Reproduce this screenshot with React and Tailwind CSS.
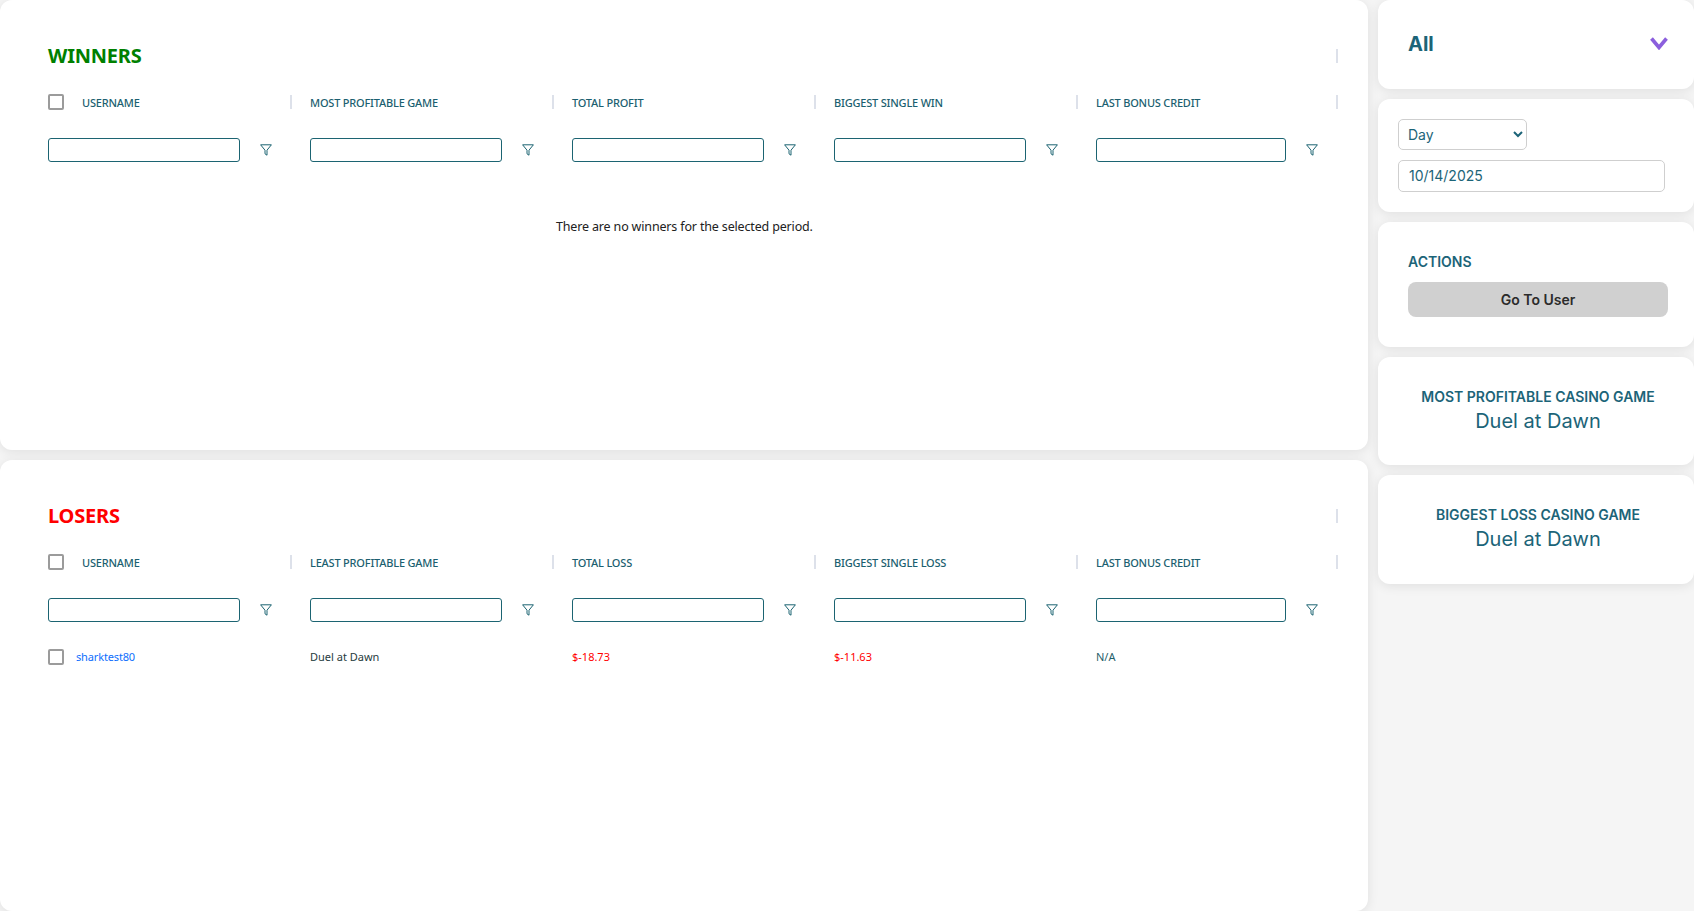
import React from 'react';

const FilterIcon = () => (
    <svg width="12" height="12" viewBox="0 0 12 12" fill="none" stroke="#1c6472" strokeWidth="1" className="shrink-0">
        <path d="M0.6 0.8H11.4L7 6.2V11.2L5 9.8V6.2Z" strokeLinejoin="round" />
    </svg>
);

const Checkbox = () => (
    <span className="block w-4 h-4 shrink-0 bg-white border-2 border-[#9b9b9b] rounded-[2px]" />
);

const Separator = () => <span className="block w-[2px] h-[14px] bg-[#dde1ea] shrink-0" />;

const Grid = ({ children, className = '' }) => (
    <div className={`grid grid-cols-[244px_244px_244px_244px_242px] gap-x-[18px] ${className}`}>{children}</div>
);

const ReportTable = ({ title, titleColor, columns, className, children }) => (
    <section className={`bg-white rounded-xl shadow-[0_2px_12px_rgba(0,0,0,0.09)] pl-12 pt-[46px] ${className}`}>
        <div className="flex justify-between items-center h-[20px] w-[1290px]">
            <h2 className={`text-[20px] leading-[20px] font-bold tracking-[-0.2px] ${titleColor}`}>{title}</h2>
            <Separator />
        </div>
        <Grid className="mt-[28px]">
            {columns.map((col, i) => (
                <div key={col} className="flex items-center justify-between h-[16px]">
                    <div className="flex items-center">
                        {i === 0 && <span className="mr-[18px]"><Checkbox /></span>}
                        <span className="pt-[2px] text-[11px] font-medium tracking-[-0.2px] text-[#1c5f70]">{col}</span>
                    </div>
                    <Separator />
                </div>
            ))}
        </Grid>
        <Grid className="mt-[28px]">
            {columns.map((col, i) => (
                <div key={col} className="flex items-center h-[24px]">
                    <input className={`h-[24px] bg-white border border-[#1c6472] rounded-[3px] ${i === 4 ? 'w-[190px]' : 'w-[192px]'}`} />
                    <span className={i === 4 ? 'ml-[20px]' : 'ml-[20px]'}><FilterIcon /></span>
                </div>
            ))}
        </Grid>
        {children}
    </section>
);

const Card = ({ className = '', children }) => (
    <div className={`bg-white rounded-xl shadow-[0_2px_12px_rgba(0,0,0,0.09)] ${className}`}>{children}</div>
);

const StatCard = ({ label, value, className }) => (
    <Card className={`pl-[30px] pr-[26px] text-center text-[#1c6478] ${className}`}>
        <div className="text-[14px] leading-[17px] font-semibold">{label}</div>
        <div className="text-[20px] leading-[24px] mt-[4px]">{value}</div>
    </Card>
);

export default function App() {
    return (
        <div className="flex h-[911px] w-[1694px] overflow-hidden bg-[#f5f5f5] font-['Inter',sans-serif]">
            <div className="w-[1368px] shrink-0 flex flex-col gap-[10px] font-['Noto_Sans',sans-serif]">
                <ReportTable
                    title="WINNERS"
                    titleColor="text-[#008000]"
                    className="h-[450px]"
                    columns={['USERNAME', 'MOST PROFITABLE GAME', 'TOTAL PROFIT', 'BIGGEST SINGLE WIN', 'LAST BONUS CREDIT']}
                >
                    <p className="mt-[56px] pl-[508px] text-[12.5px] leading-[18px] tracking-[-0.16px] text-[#212121]">There are no winners for the selected period.</p>
                </ReportTable>
                <ReportTable
                    title="LOSERS"
                    titleColor="text-[#ff0000]"
                    className="flex-1"
                    columns={['USERNAME', 'LEAST PROFITABLE GAME', 'TOTAL LOSS', 'BIGGEST SINGLE LOSS', 'LAST BONUS CREDIT']}
                >
                    <Grid className="mt-[27px] text-[11px] leading-[16px] items-center">
                        <div className="flex items-center">
                            <Checkbox />
                            <a href="#" className="ml-3 tracking-[-0.15px] text-[#0d6efd]">sharktest80</a>
                        </div>
                        <div className="text-[#1f3b40]">Duel at Dawn</div>
                        <div className="text-[#ff0000]">$-18.73</div>
                        <div className="text-[#ff0000]">$-11.63</div>
                        <div className="text-[#1f5f6a]">N/A</div>
                    </Grid>
                </ReportTable>
            </div>
            <aside className="w-[316px] ml-[10px] shrink-0 flex flex-col gap-[10px]">
                <Card className="h-[89px] pl-[30px] pr-[26px] pb-[2px] flex items-center justify-between">
                    <span className="text-[20px] font-bold text-[#1c6478]">All</span>
                    <svg width="18" height="13" viewBox="0 0 18 13" fill="none" stroke="#8b5fdd" strokeWidth="3.6">
                        <path d="M1.5 1.5L9 10.5L16.5 1.5" />
                    </svg>
                </Card>
                <Card className="h-[113px] pl-5 pt-5">
                    <select defaultValue="Day" className="block w-[129px] h-[31px] pl-[5px] bg-white border border-[#cfcfcf] rounded-[5px] text-[14px] text-[#1c6478]">
                        <option>Day</option>
                        <option>Week</option>
                        <option>Month</option>
                    </select>
                    <input defaultValue="10/14/2025" className="block mt-[10px] w-[267px] h-[32px] px-[10px] pb-[2px] bg-white border border-[#cfcfcf] rounded-[5px] text-[14px] text-[#1c6478]" />
                </Card>
                <Card className="h-[125px] pl-[30px] pr-[26px] pt-[31px]">
                    <div className="text-[14px] leading-[17px] font-semibold text-[#1c6478]">ACTIONS</div>
                    <button className="block mt-[12px] w-full h-[35px] bg-[#d0d0d0] rounded-lg text-[14px] font-semibold text-[#2b2b2b]">Go To User</button>
                </Card>
                <StatCard label="MOST PROFITABLE CASINO GAME" value="Duel at Dawn" className="h-[108px] pt-[31px]" />
                <StatCard label="BIGGEST LOSS CASINO GAME" value="Duel at Dawn" className="h-[109px] pt-[31px]" />
            </aside>
        </div>
    );
}
